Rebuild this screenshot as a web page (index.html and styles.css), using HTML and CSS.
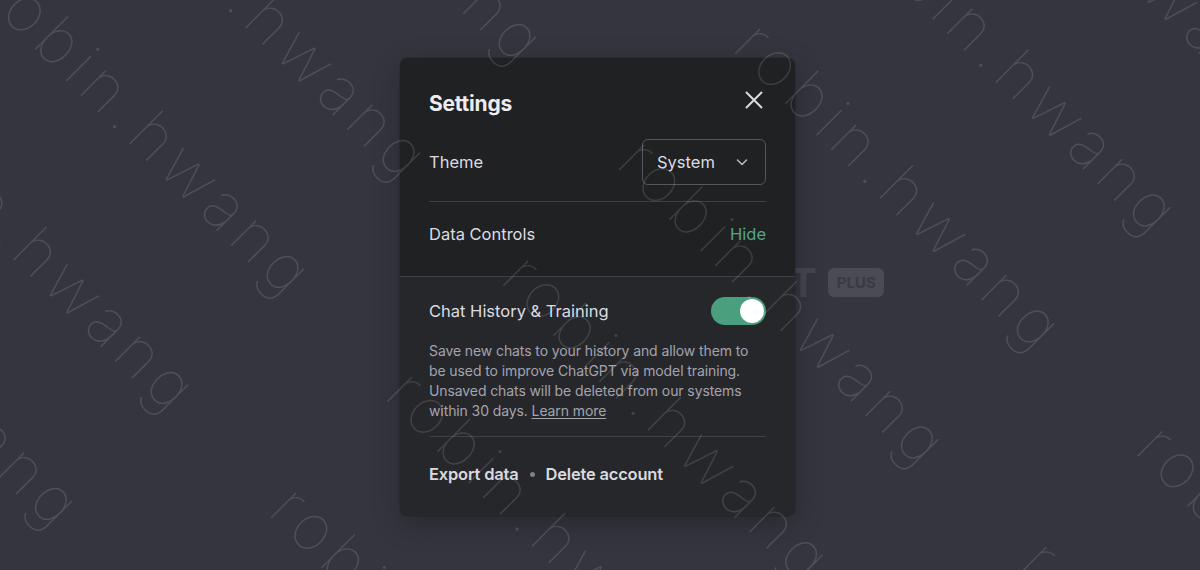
FILE: index.html
```html
<!DOCTYPE html>
<html lang="en">
<head>
<meta charset="utf-8">
<title>Settings</title>
<link rel="stylesheet" href="styles.css">
</head>
<body>
<main class="page">
  <div class="brand">
    <h1 class="brand-name">ChatGPT</h1>
    <span class="badge">PLUS</span>
  </div>
</main>

<div class="overlay">
  <div class="modal" role="dialog" aria-label="Settings">
    <div class="modal-head">
      <h2 class="modal-title">Settings</h2>
      <button class="close" aria-label="Close">
        <svg width="24" height="24" viewBox="0 0 24 24" fill="none" stroke="currentColor" stroke-width="2" stroke-linecap="round"><path d="M4.5 4.5l15 15M19.5 4.5l-15 15"/></svg>
      </button>
    </div>
    <div class="modal-body">
      <div class="row theme-row">
        <span class="label">Theme</span>
        <div class="select">
          <span>System</span>
          <svg class="chev" width="14" height="14" viewBox="0 0 14 14" fill="none" stroke="currentColor" stroke-width="1.6" stroke-linecap="round" stroke-linejoin="round"><path d="M2.5 5l4.5 4.5L11.5 5"/></svg>
        </div>
      </div>
      <div class="row dc-row">
        <span class="label">Data Controls</span>
        <button class="link">Hide</button>
      </div>
    </div>
    <div class="data-section">
      <div class="row toggle-row">
        <span class="label">Chat History &amp; Training</span>
        <span class="switch" role="switch" aria-checked="true"><span class="knob"></span></span>
      </div>
      <p class="desc">Save new chats to your history and allow them to be used to improve ChatGPT via model training. Unsaved chats will be deleted from our systems within 30 days. <a href="#" class="learn">Learn more</a></p>
      <div class="footer">
        <button class="action">Export data</button>
        <span class="dot"></span>
        <button class="action">Delete account</button>
      </div>
    </div>
  </div>
</div>

<div class="wm-layer" aria-hidden="true">
  <div class="wm">
    <div class="wm-row"><span class="wm-word">robin.hwang</span><span class="wm-word">robin.hwang</span><span class="wm-word">robin.hwang</span></div>
    <div class="wm-row"><span class="wm-word">robin.hwang</span><span class="wm-word">robin.hwang</span><span class="wm-word">robin.hwang</span></div>
    <div class="wm-row"><span class="wm-word">robin.hwang</span><span class="wm-word">robin.hwang</span><span class="wm-word">robin.hwang</span></div>
    <div class="wm-row"><span class="wm-word">robin.hwang</span><span class="wm-word">robin.hwang</span><span class="wm-word">robin.hwang</span></div>
    <div class="wm-row"><span class="wm-word">robin.hwang</span><span class="wm-word">robin.hwang</span><span class="wm-word">robin.hwang</span></div>
    <div class="wm-row"><span class="wm-word">robin.hwang</span><span class="wm-word">robin.hwang</span><span class="wm-word">robin.hwang</span></div>
    <div class="wm-row"><span class="wm-word">robin.hwang</span><span class="wm-word">robin.hwang</span><span class="wm-word">robin.hwang</span></div>
    <div class="wm-row"><span class="wm-word">robin.hwang</span><span class="wm-word">robin.hwang</span><span class="wm-word">robin.hwang</span></div>
    <div class="wm-row"><span class="wm-word">robin.hwang</span><span class="wm-word">robin.hwang</span><span class="wm-word">robin.hwang</span></div>
    <div class="wm-row"><span class="wm-word">robin.hwang</span><span class="wm-word">robin.hwang</span><span class="wm-word">robin.hwang</span></div>
  </div>
</div>
</body>
</html>
```

FILE: styles.css
```css
* { box-sizing: border-box; }

html, body {
  margin: 0;
  height: 100%;
  overflow: hidden;
}

body {
  background: #35353f;
  font-family: Inter, "Noto Sans", "Liberation Sans", sans-serif;
  color: #ececf1;
  position: relative;
}

/* background page */
.page {
  height: 100%;
  display: flex;
  align-items: center;
  justify-content: center;
  padding-left: 329px;
  padding-bottom: 6px;
}

.brand {
  display: flex;
  align-items: center;
  gap: 12px;
}

.brand-name {
  margin: 0;
  font-size: 40px;
  font-weight: 700;
  color: #44454f;
  letter-spacing: -0.5px;
}

.badge {
  display: inline-flex;
  align-items: center;
  justify-content: center;
  width: 56px;
  height: 29px;
  border-radius: 6px;
  background: #4a4b54;
  color: #393a42;
  font-size: 15px;
  font-weight: 700;
}

/* modal */
.overlay {
  position: absolute;
  inset: 0;
  display: flex;
  align-items: flex-start;
  padding: 58px 0 0 400px;
}

.modal {
  width: 395px;
  background: #202123;
  border-radius: 8px;
  overflow: hidden;
  box-shadow: 0 0 0 1px rgba(0, 0, 0, 0.12), 0 8px 28px rgba(0, 0, 0, 0.25);
}

.modal-head {
  display: flex;
  justify-content: space-between;
  align-items: flex-start;
  padding: 29px 29px 5px;
}

.modal-title {
  margin: 0;
  padding-top: 3px;
  font-size: 21px;
  line-height: 28px;
  font-weight: 700;
  color: #ececf1;
  letter-spacing: -0.2px;
}

.close {
  display: flex;
  padding: 0;
  margin-top: 1px;
  border: 0;
  background: none;
  color: #d9d9e3;
}

.modal-body {
  padding: 0 29px;
}

.row {
  display: flex;
  align-items: center;
  justify-content: space-between;
}

.label {
  font-size: 16.5px;
  line-height: 24px;
  color: #dcdce2;
}

.theme-row {
  padding: 16px 0;
  border-bottom: 1px solid #3e3f47;
}

.select {
  width: 124px;
  height: 46px;
  border: 1px solid #55565f;
  border-radius: 6px;
  display: flex;
  align-items: center;
  justify-content: space-between;
  padding: 0 16px 0 14px;
  font-size: 16.5px;
  color: #dcdce2;
}

.chev {
  color: #b4b4bf;
}

.dc-row {
  padding: 20px 0 30px;
}

.link {
  border: 0;
  background: none;
  padding: 0;
  font-family: inherit;
  font-size: 16.5px;
  line-height: 24px;
  color: #55a587;
}

.data-section {
  background: #26272b;
  border-top: 1px solid #3e3f47;
  padding: 20px 29px 0;
}

.toggle-row {
  height: 28px;
}

.switch {
  width: 55px;
  height: 28px;
  border-radius: 14px;
  background: #4a9f7f;
  display: flex;
  align-items: center;
  justify-content: flex-end;
  padding: 0 2px;
}

.knob {
  width: 24px;
  height: 24px;
  border-radius: 50%;
  background: #ffffff;
}

.desc {
  margin: 16px 0 0;
  font-size: 14px;
  line-height: 20px;
  color: #a3a3ae;
  letter-spacing: -0.1px;
}

.learn {
  color: inherit;
  text-decoration: underline;
  text-underline-offset: 2px;
}

.footer {
  margin-top: 15px;
  border-top: 1px solid #3e3f47;
  padding: 25px 0 30px;
  display: flex;
  align-items: center;
  gap: 11px;
}

.action {
  border: 0;
  background: none;
  padding: 0;
  font-family: inherit;
  font-size: 16.5px;
  line-height: 24px;
  font-weight: 600;
  color: #d9d9df;
  letter-spacing: -0.2px;
}

.dot {
  width: 5px;
  height: 5px;
  border-radius: 50%;
  background: #7d7e88;
}

/* watermark overlay */
.wm-layer {
  position: absolute;
  inset: 0;
  overflow: hidden;
  pointer-events: none;
}

.wm {
  position: absolute;
  left: 0;
  top: 0;
  transform-origin: 0 0;
  transform: rotate(45deg) translate(-18px, -1079px);
}

.wm-row {
  display: flex;
  height: 164px;
  line-height: 164px;
}

.wm-word {
  flex: 0 0 569px;
  white-space: nowrap;
  font-family: Inter, Lato, sans-serif;
  font-weight: 100;
  font-size: 64px;
  letter-spacing: 7px;
  color: rgba(255, 255, 255, 0.13);
}
```
